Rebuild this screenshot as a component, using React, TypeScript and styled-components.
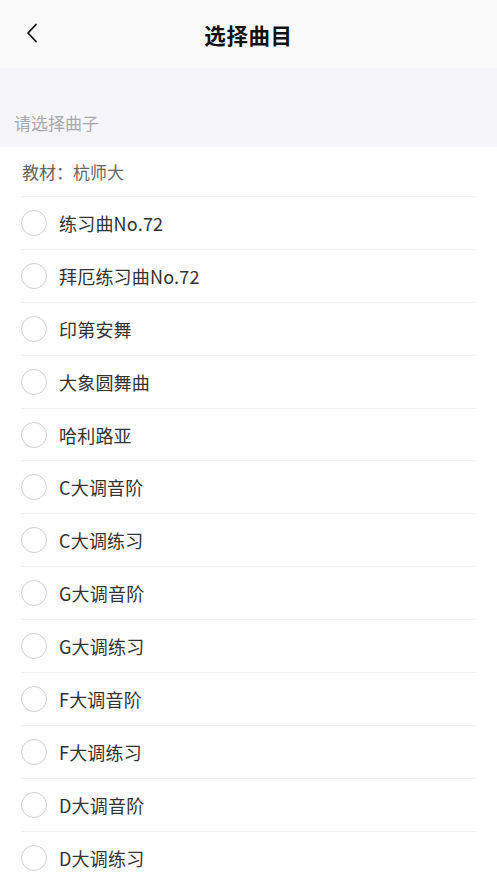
import React from "react";
import styled, { createGlobalStyle } from "styled-components";

const GlobalStyle = createGlobalStyle`
  html, body {
    margin: 0;
    padding: 0;
    background: #ffffff;
  }
  body {
    font-family: "Noto Sans CJK SC", "Noto Sans", sans-serif;
  }
`;

const Page = styled.div`
  width: 497px;
  min-height: 883px;
  background: #ffffff;
  overflow: hidden;
`;

const Header = styled.div`
  position: relative;
  height: 68px;
  background: #fafafa;
  display: flex;
  align-items: center;
  justify-content: center;
`;

const BackButton = styled.button`
  position: absolute;
  left: 20px;
  top: 18px;
  width: 24px;
  height: 30px;
  padding: 0;
  border: none;
  background: transparent;
  display: flex;
  align-items: center;
  justify-content: center;
`;

const Title = styled.h1`
  margin: 0;
  font-size: 21.5px;
  font-weight: 700;
  color: #111111;
  letter-spacing: 0.6px;
`;

const Hint = styled.div`
  height: 79px;
  background: #f6f6fa;
  display: flex;
  align-items: flex-end;
  padding: 0 14px 12px;
  box-sizing: border-box;
  font-size: 17px;
  color: #a8a8ac;
`;

const List = styled.div`
  padding: 0 21px;
`;

const Textbook = styled.div`
  height: 49px;
  display: flex;
  align-items: center;
  font-size: 17px;
  color: #666666;
  padding-left: 1px;
  border-bottom: 1px solid #f0f0f2;
`;

const Row = styled.label`
  height: 52.9px;
  display: flex;
  align-items: center;
  gap: 12px;
  border-bottom: 1px solid #f0f0f2;
  box-sizing: border-box;
  &:last-child {
    border-bottom: none;
  }
`;

const Radio = styled.span`
  width: 26px;
  height: 26px;
  border-radius: 50%;
  border: 1.5px solid #d0d0d0;
  box-sizing: border-box;
  flex-shrink: 0;
`;

const RowText = styled.span`
  font-size: 18px;
  color: #333333;
  letter-spacing: 0.2px;
`;

const songs = [
  "练习曲No.72",
  "拜厄练习曲No.72",
  "印第安舞",
  "大象圆舞曲",
  "哈利路亚",
  "C大调音阶",
  "C大调练习",
  "G大调音阶",
  "G大调练习",
  "F大调音阶",
  "F大调练习",
  "D大调音阶",
  "D大调练习",
];

export default function App() {
  return (
    <Page>
      <GlobalStyle />
      <Header>
        <BackButton aria-label="返回">
          <svg width="12" height="20" viewBox="0 0 12 20" fill="none">
            <path
              d="M10 1.5L2 10l8 8.5"
              stroke="#111"
              strokeWidth="1.8"
              strokeLinecap="round"
              strokeLinejoin="round"
            />
          </svg>
        </BackButton>
        <Title>选择曲目</Title>
      </Header>
      <Hint>请选择曲子</Hint>
      <List>
        <Textbook>教材：杭师大</Textbook>
        {songs.map((s) => (
          <Row key={s}>
            <Radio />
            <RowText>{s}</RowText>
          </Row>
        ))}
      </List>
    </Page>
  );
}
